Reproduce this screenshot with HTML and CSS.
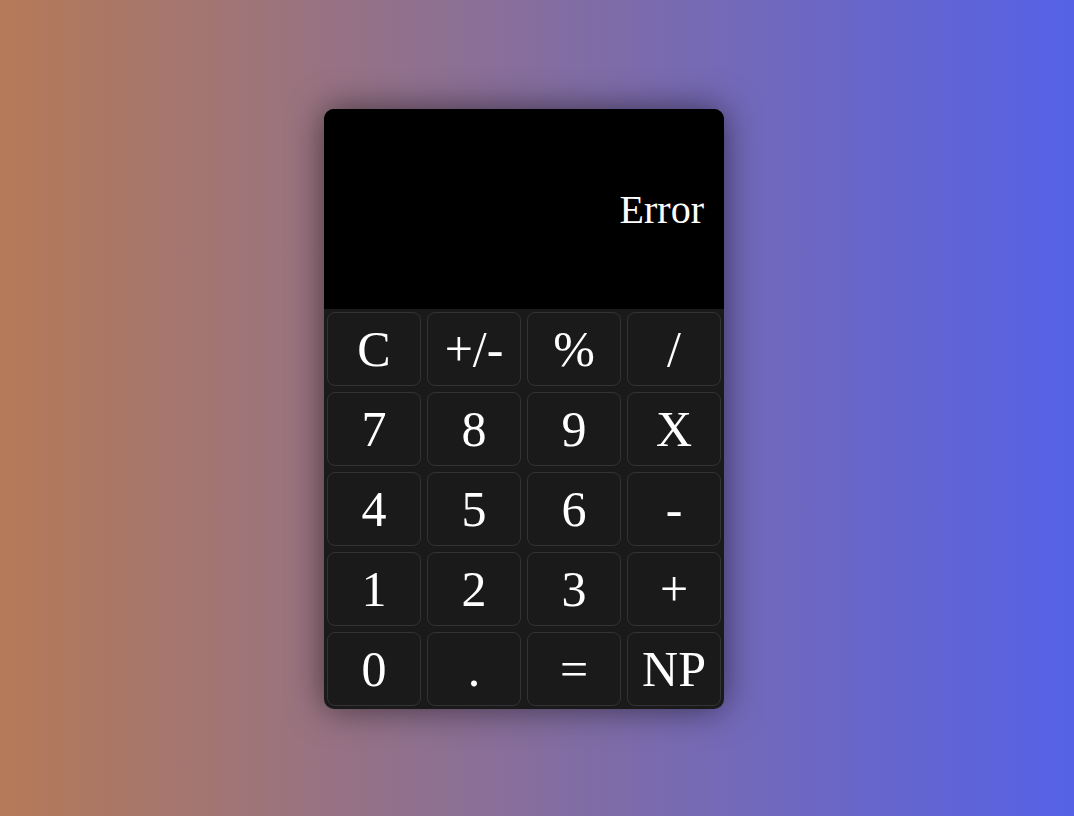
FILE: index.html
```html
<!DOCTYPE html>
<html>
<head>
<meta charset="utf-8">
<link rel="stylesheet" href="styles.css">
</head>
<body>
<div class="calc">
  <div class="display">Error</div>
  <div class="keys">
    <button class="key">C</button>
    <button class="key">+/-</button>
    <button class="key">%</button>
    <button class="key">/</button>
    <button class="key">7</button>
    <button class="key">8</button>
    <button class="key">9</button>
    <button class="key">X</button>
    <button class="key">4</button>
    <button class="key">5</button>
    <button class="key">6</button>
    <button class="key">-</button>
    <button class="key">1</button>
    <button class="key">2</button>
    <button class="key">3</button>
    <button class="key">+</button>
    <button class="key">0</button>
    <button class="key">.</button>
    <button class="key">=</button>
    <button class="key">NP</button>
  </div>
</div>
</body>
</html>
```
FILE: styles.css
```css
* { box-sizing: border-box; }
html, body { margin: 0; height: 100%; }
body {
  display: flex;
  align-items: center;
  justify-content: center;
  padding-right: 26px;
  padding-top: 2px;
  background: linear-gradient(to right, #b57a57, #5561e6);
  font-family: "Liberation Serif", "Times New Roman", serif;
}
.calc {
  width: 400px;
  height: 600px;
  border-radius: 10px;
  overflow: hidden;
  background: #1a1a1a;
  box-shadow: 0 0 35px rgba(0, 0, 0, 0.55);
  display: flex;
  flex-direction: column;
}
.display {
  height: 200px;
  background: #000;
  color: #fff;
  font-size: 40px;
  display: flex;
  align-items: center;
  justify-content: flex-end;
  padding-right: 20px;
}
.keys {
  display: grid;
  grid-template-columns: repeat(4, 1fr);
  grid-auto-rows: 80px;
}
.key {
  margin: 3px;
  background: #1a1a1a;
  border: 1px solid #333;
  border-radius: 8px;
  color: #fff;
  font-family: inherit;
  font-size: 50px;
  padding: 0;
}
```
